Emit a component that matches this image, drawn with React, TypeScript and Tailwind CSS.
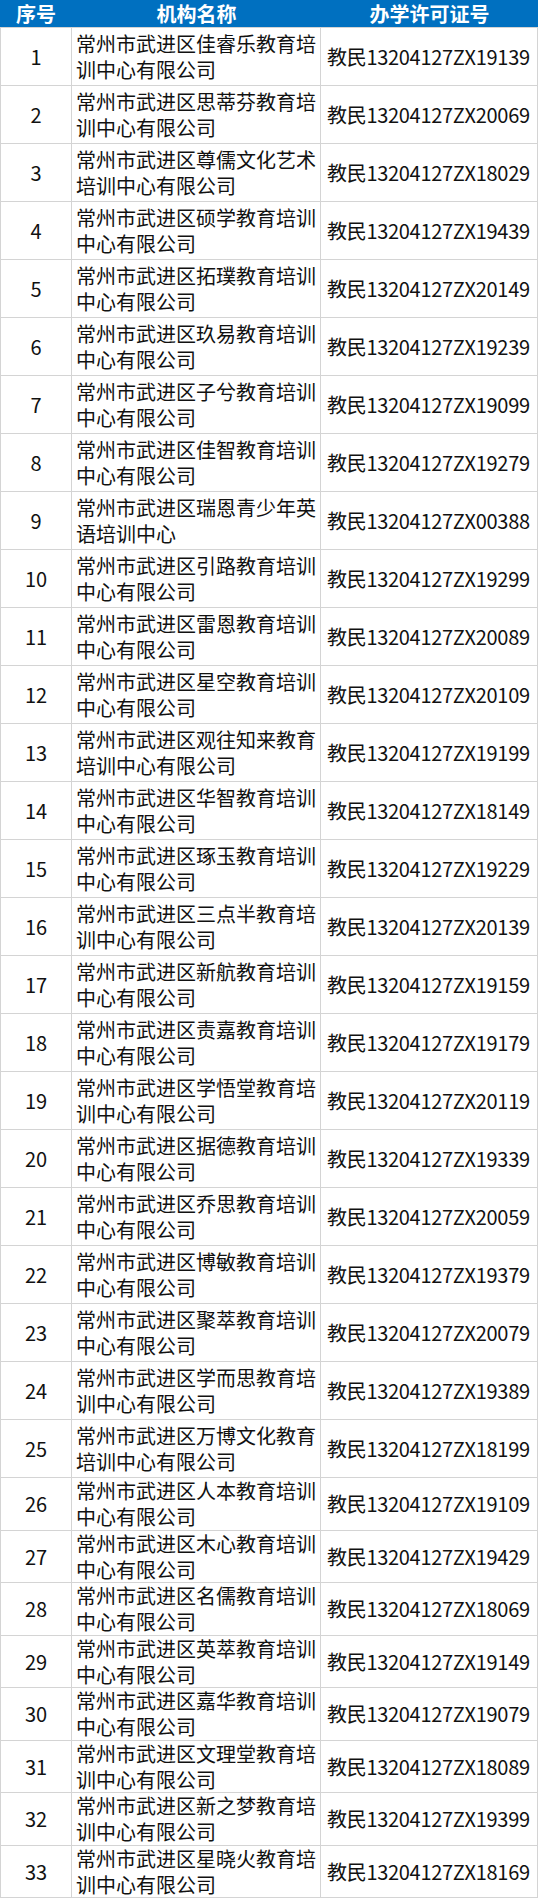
const rows: [string, string][] = [
  ["常州市武进区佳睿乐教育培训中心有限公司", "19139"],
  ["常州市武进区思蒂芬教育培训中心有限公司", "20069"],
  ["常州市武进区尊儒文化艺术培训中心有限公司", "18029"],
  ["常州市武进区硕学教育培训中心有限公司", "19439"],
  ["常州市武进区拓璞教育培训中心有限公司", "20149"],
  ["常州市武进区玖易教育培训中心有限公司", "19239"],
  ["常州市武进区子兮教育培训中心有限公司", "19099"],
  ["常州市武进区佳智教育培训中心有限公司", "19279"],
  ["常州市武进区瑞恩青少年英语培训中心", "00388"],
  ["常州市武进区引路教育培训中心有限公司", "19299"],
  ["常州市武进区雷恩教育培训中心有限公司", "20089"],
  ["常州市武进区星空教育培训中心有限公司", "20109"],
  ["常州市武进区观往知来教育培训中心有限公司", "19199"],
  ["常州市武进区华智教育培训中心有限公司", "18149"],
  ["常州市武进区琢玉教育培训中心有限公司", "19229"],
  ["常州市武进区三点半教育培训中心有限公司", "20139"],
  ["常州市武进区新航教育培训中心有限公司", "19159"],
  ["常州市武进区责嘉教育培训中心有限公司", "19179"],
  ["常州市武进区学悟堂教育培训中心有限公司", "20119"],
  ["常州市武进区据德教育培训中心有限公司", "19339"],
  ["常州市武进区乔思教育培训中心有限公司", "20059"],
  ["常州市武进区博敏教育培训中心有限公司", "19379"],
  ["常州市武进区聚萃教育培训中心有限公司", "20079"],
  ["常州市武进区学而思教育培训中心有限公司", "19389"],
  ["常州市武进区万博文化教育培训中心有限公司", "18199"],
  ["常州市武进区人本教育培训中心有限公司", "19109"],
  ["常州市武进区木心教育培训中心有限公司", "19429"],
  ["常州市武进区名儒教育培训中心有限公司", "18069"],
  ["常州市武进区英萃教育培训中心有限公司", "19149"],
  ["常州市武进区嘉华教育培训中心有限公司", "19079"],
  ["常州市武进区文理堂教育培训中心有限公司", "18089"],
  ["常州市武进区新之梦教育培训中心有限公司", "19399"],
  ["常州市武进区星晓火教育培训中心有限公司", "18169"],
];

const App = () => {
  return (
    <div
      className="w-[538px] bg-white text-[#111] text-[20px]"
      style={{ fontFamily: '"Noto Sans CJK SC", sans-serif' }}
    >
      {/* 表头 */}
      <div className="grid grid-cols-[72px_249px_217px] h-[28px] bg-[#0070c0] text-white font-bold leading-[28px] border-b border-[#d4d4d4]">
        <div className="text-center">序号</div>
        <div className="text-center">机构名称</div>
        <div className="text-center">办学许可证号</div>
      </div>
      {rows.map(([name, code], i) => (
        <div
          key={i}
          className={
            "grid grid-cols-[72px_249px_217px] border-b border-[#d4d4d4] " +
            (i < 25 ? "h-[58px]" : "h-[52.5px]")
          }
        >
          <div className="flex items-center justify-center border-x border-[#d4d4d4]">
            {i + 1}
          </div>
          <div className="flex items-center pl-[4px] leading-[26px] border-r border-[#d4d4d4]">
            <span>{name}</span>
          </div>
          <div className="flex items-center pl-[6px] tracking-[-0.3px] border-r border-[#d4d4d4]">
            教民13204127ZX{code}
          </div>
        </div>
      ))}
    </div>
  );
};

export default App;
